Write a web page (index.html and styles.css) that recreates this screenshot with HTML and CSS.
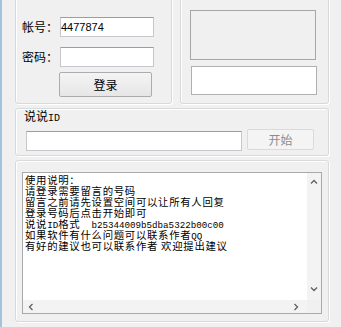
FILE: index.html
```html
<!DOCTYPE html>
<html>
<head>
<meta charset="utf-8">
<link rel="stylesheet" href="styles.css">
</head>
<body>
<div class="win">
  <div class="top">
    <div class="grp grp-login">
      <div class="row"><span class="lbl">帐号：</span><div class="tb tb-acc">4477874</div></div>
      <div class="row row-pwd"><span class="lbl">密码：</span><div class="tb tb-acc"></div></div>
      <div class="btn btn-login">登录</div>
    </div>
    <div class="grp grp-pic">
      <div class="pic"></div>
      <div class="tb tb-code"></div>
    </div>
  </div>
  <div class="grp grp-id">
    <div class="cap">说说<span class="mono cap-mono">ID</span></div>
    <div class="id-row">
      <div class="tb tb-id"></div>
      <div class="btn btn-start">开始</div>
    </div>
  </div>
  <div class="grp grp-log">
    <div class="memo">
      <div class="memo-text">
        <div class="ln">使用说明：</div>
        <div class="ln">请登录需要留言的号码</div>
        <div class="ln">留言之前请先设置空间可以让所有人回复</div>
        <div class="ln">登录号码后点击开始即可</div>
        <div class="ln">说说<span class="mono">ID</span>格式<span class="mono">  b25344009b5dba5322b00c00</span></div>
        <div class="ln">如果软件有什么问题可以联系作者<span class="mono">QQ</span></div>
        <div class="ln">有好的建议也可以联系作者 欢迎提出建议</div>
      </div>
      <div class="vscroll">
        <svg class="arr" width="8" height="6" viewBox="0 0 8 6"><path d="M1 4.5 L4 1.5 L7 4.5" fill="none" stroke="#606060" stroke-width="1.3"/></svg>
        <svg class="arr" width="8" height="6" viewBox="0 0 8 6"><path d="M1 1.5 L4 4.5 L7 1.5" fill="none" stroke="#606060" stroke-width="1.3"/></svg>
      </div>
      <div class="hscroll">
        <svg class="arr" width="6" height="8" viewBox="0 0 6 8"><path d="M4.5 1 L1.5 4 L4.5 7" fill="none" stroke="#606060" stroke-width="1.3"/></svg>
        <svg class="arr" width="6" height="8" viewBox="0 0 6 8"><path d="M1.5 1 L4.5 4 L1.5 7" fill="none" stroke="#606060" stroke-width="1.3"/></svg>
      </div>
      <div class="corner"></div>
    </div>
  </div>
</div>
</body>
</html>
```
FILE: styles.css
```css
* { box-sizing: border-box; }
html, body { margin: 0; padding: 0; }
body {
  background: #f0f0f0;
  font-family: "Noto Sans CJK SC", "Noto Sans", sans-serif;
  font-size: 12px;
  color: #000;
}
.win {
  width: 341px;
  height: 327px;
  overflow: hidden;
  border-left: 2px solid #a2c4df;
  padding-left: 13px;
  background: #f0f0f0;
}
.grp {
  border: 1px solid #d9d9d9;
  border-radius: 3px;
  box-shadow: inset 1px 1px 0 #fff, 1px 1px 0 #fff;
}
.top {
  display: flex;
  gap: 8px;
  margin-top: -6px;
  height: 110px;
}
.grp-login {
  width: 157px;
  height: 110px;
  padding: 22px 0 0 6px;
}
.row {
  display: flex;
  align-items: center;
  height: 20px;
}
.row-pwd { margin-top: 10px; }
.lbl {
  width: 38px;
  line-height: 14px;
  font-size: 12px;
}
.tb {
  background: #fff;
  border: 1px solid #c5c8cc;
  border-top-color: #9a9da2;
}
.tb-acc {
  width: 94px;
  height: 20px;
  font-family: "Liberation Sans", sans-serif;
  font-size: 11px;
  line-height: 18px;
  padding-left: 0;
}
.btn {
  display: flex;
  align-items: center;
  justify-content: center;
  border: 1px solid #acacac;
  border-radius: 2px;
  background: linear-gradient(#f4f4f4, #e6e6e6);
  font-size: 12px;
}
.btn-login {
  width: 93px;
  height: 25px;
  margin: 5px 0 0 37px;
}
.grp-pic {
  width: 149px;
  height: 110px;
  padding: 15px 0 0 9px;
}
.pic {
  width: 126px;
  height: 50px;
  border: 1px solid #a6a6a6;
  background: #f0f0f0;
}
.tb-code {
  width: 126px;
  height: 29px;
  margin: 6px 0 0 1px;
  border-color: #b0b0b0;
}
.grp-id {
  width: 314px;
  height: 48px;
  margin-top: 4px;
  padding: 0 0 0 10px;
}
.cap {
  line-height: 14px;
  font-size: 12px;
  margin: 0 0 0 -2px;
}
.mono {
  font-family: "Liberation Mono", monospace;
  font-size: 9.2px;
  white-space: pre;
}
.cap-mono { font-size: 10px; }
.id-row {
  display: flex;
  align-items: flex-start;
  gap: 5px;
  margin-top: 3px;
}
.tb-id {
  width: 216px;
  height: 20px;
  margin-top: 2px;
}
.btn-start {
  width: 67px;
  height: 21px;
  color: #8d8d8d;
  border-color: #dadada;
  background: #f4f4f4;
}
.grp-log {
  width: 314px;
  height: 162px;
  margin-top: 4px;
  padding: 11px 0 0 6px;
}
.memo {
  width: 300px;
  height: 142px;
  border: 1px solid #a9a9a9;
  background: #fff;
  display: grid;
  grid-template-columns: 1fr 14px;
  grid-template-rows: 1fr 13px;
}
.memo-text {
  padding: 1px 0 0 2px;
  font-size: 10.4px;
  letter-spacing: 0.7px;
  white-space: nowrap;
  overflow: visible;
  min-width: 0;
}
.ln {
  height: 11px;
  line-height: 11px;
}
.ln .mono { letter-spacing: 0; }
.vscroll {
  background: #f3f3f3;
  display: flex;
  flex-direction: column;
  justify-content: space-between;
  align-items: center;
  padding: 6px 0 8px;
}
.hscroll {
  background: #f3f3f3;
  display: flex;
  justify-content: space-between;
  align-items: center;
  padding: 0 8px 0 5px;
}
.corner { background: #f0f0f0; }
.arr { display: block; }
```
